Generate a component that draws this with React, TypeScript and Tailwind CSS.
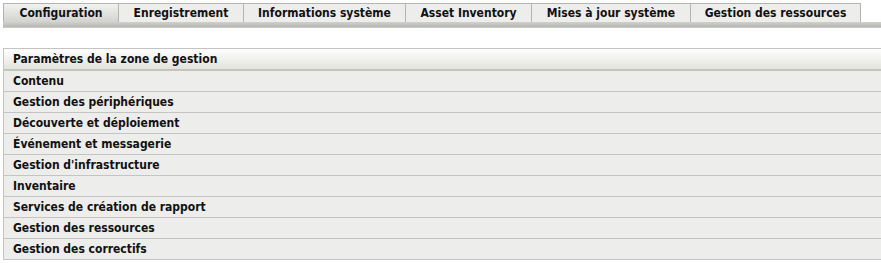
import React from 'react';

const tabs = [
  { label: 'Configuration', width: 'w-[115px]', active: true },
  { label: 'Enregistrement', width: 'w-[125px]' },
  { label: 'Informations système', width: 'w-[162px]' },
  { label: 'Asset Inventory', width: 'w-[126px]' },
  { label: 'Mises à jour système', width: 'w-[159px]' },
  { label: 'Gestion des ressources', width: 'w-[171px]' },
];

const rows = [
  'Contenu',
  'Gestion des périphériques',
  'Découverte et déploiement',
  'Événement et messagerie',
  "Gestion d'infrastructure",
  'Inventaire',
  'Services de création de rapport',
  'Gestion des ressources',
  'Gestion des correctifs',
];

const fontStack = "font-['DejaVu_Sans_Condensed','DejaVu_Sans','Liberation_Sans',sans-serif]";

const App: React.FC = () => {
  return (
    <div className={`min-h-[263px] bg-white pl-[3px] pt-[3px] overflow-hidden text-[12px] font-bold text-[#111] ${fontStack}`}>
      {/* Tab bar */}
      <div className="flex">
        {tabs.map((tab, i) => (
          <div
            key={tab.label}
            className={
              'h-[19px] flex items-center justify-center border-t border-l border-[#b4b4b4] leading-none ' +
              tab.width +
              (i === tabs.length - 1 ? ' border-r' : '') +
              (tab.active
                ? ' bg-gradient-to-b from-[#f2f2f0] to-[#d2d2ce]'
                : ' bg-[#ededeb]')
            }
          >
            {tab.label}
          </div>
        ))}
      </div>
      <div className="h-[6px] w-[900px] bg-gradient-to-b from-[#d0d0cc] to-[#b6b6b2] border-b border-[#c8c8c8]" />

      {/* Settings panel */}
      <div className="mt-[20px] w-[900px] border-t border-l border-[#c4c4c4]">
        <div className="h-[22px] flex items-center pl-[9px] bg-gradient-to-b from-[#ffffff] to-[#e2e2de] border-b-2 border-[#c4c4bc]">
          Paramètres de la zone de gestion
        </div>
        {rows.map((row) => (
          <div
            key={row}
            className="h-[21px] flex items-center pl-[9px] bg-[#ededeb] border-b border-[#c4c4c4]"
          >
            {row}
          </div>
        ))}
      </div>
    </div>
  );
};

export default App;
